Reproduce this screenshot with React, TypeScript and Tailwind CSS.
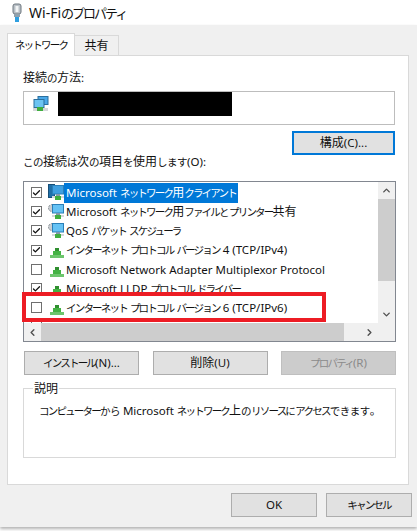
// Wi-Fi properties dialog (Windows 10), network tab with IPv6 row highlighted.
import { Check, ChevronUp, ChevronDown, ChevronLeft, ChevronRight } from 'lucide-react';

type IconKind = 'client' | 'service' | 'protocol';

interface Row {
  label: string;
  checked: boolean;
  icon: IconKind;
  selected?: boolean;
}

const ROWS: Row[] = [
  { label: 'Microsoft ネットワーク用クライアント', checked: true, icon: 'client', selected: true },
  { label: 'Microsoft ネットワーク用ファイルとプリンター共有', checked: true, icon: 'service' },
  { label: 'QoS パケット スケジューラ', checked: true, icon: 'service' },
  { label: 'インターネット プロトコル バージョン 4 (TCP/IPv4)', checked: true, icon: 'protocol' },
  { label: 'Microsoft Network Adapter Multiplexor Protocol', checked: false, icon: 'protocol' },
  { label: 'Microsoft LLDP プロトコル ドライバー', checked: true, icon: 'protocol' },
  { label: 'インターネット プロトコル バージョン 6 (TCP/IPv6)', checked: false, icon: 'protocol' },
  { label: 'Link-Layer Topology Discovery Responder', checked: true, icon: 'protocol' },
];

// The dialog font has narrow katakana and slightly narrow hiragana, so each
// script run gets its own size and tracking.
function T({ children }: { children: string }) {
  const parts = children.split(/([\u3040-\u309f]+|[\u30a0-\u30ff]+|[\u4e00-\u9fff]+)/);
  return (
    <>
      {parts.map((p, i) => {
        if (/^[\u3040-\u309f]/.test(p)) {
          return (
            <span key={i} className="text-[10.5px] tracking-[-0.5px]">
              {p}
            </span>
          );
        }
        if (/^[\u30a0-\u30ff]/.test(p)) {
          return (
            <span key={i} className="text-[10.5px] tracking-[-1.8px]">
              {p}
            </span>
          );
        }
        if (/^[\u4e00-\u9fff]/.test(p)) {
          return (
            <span key={i} className="text-[12px]">
              {p}
            </span>
          );
        }
        return <span key={i}>{p}</span>;
      })}
    </>
  );
}

function PlugIcon() {
  return (
    <svg width="12" height="19" viewBox="0 0 12 19" className="shrink-0">
      <rect x="2" y="1" width="8" height="10" rx="2" fill="#b9c0c6" stroke="#6f7880" />
      <rect x="4.5" y="3" width="3" height="6" fill="#f2f4f5" />
      <rect x="3" y="11" width="6" height="3" fill="#8fa1ad" />
      <rect x="4" y="14" width="4" height="5" fill="#2f9fe0" />
    </svg>
  );
}

function AdapterIcon() {
  return (
    <svg width="16" height="16" viewBox="0 0 16 16" className="shrink-0">
      <rect x="5" y="0.5" width="10" height="8" fill="#4aa8e8" stroke="#2a6f9e" />
      <rect x="1" y="3.5" width="10" height="8" fill="#6cc4f2" stroke="#2a6f9e" />
      <rect x="0" y="12" width="15" height="3" fill="#d5d8da" />
      <rect x="4" y="11" width="6" height="4" fill="#3fae3f" />
    </svg>
  );
}

function RowIcon({ kind }: { kind: IconKind }) {
  if (kind === 'protocol') {
    return (
      <svg width="14" height="10" viewBox="0 0 14 10" className="shrink-0 mt-[5px]">
        <rect x="5" y="0" width="4" height="4" fill="#2f8f2f" />
        <rect x="3" y="3" width="8" height="4" fill="#43b243" />
        <rect x="0" y="7" width="14" height="3" fill="#6cc56c" />
      </svg>
    );
  }
  const gear = kind === 'service';
  return (
    <svg width="17" height="17" viewBox="0 0 17 17" className="shrink-0">
      {gear ? (
        <circle cx="4" cy="5" r="3.5" fill="#c9ced2" stroke="#8a9096" strokeDasharray="2 1" />
      ) : (
        <rect x="0.5" y="0.5" width="6" height="13" fill="#1f6fa8" stroke="#174f78" />
      )}
      <rect x="4.5" y="1.5" width="11" height="8.5" fill={gear ? '#65c2f4' : '#3f9fe0'} stroke="#2a7fb8" />
      <rect x="8" y="10" width="4" height="2" fill="#7f98a8" />
      <rect x="4" y="12" width="12" height="2" fill="#d5d8da" />
      <rect x="7" y="12" width="6" height="4" fill="#3fae3f" />
    </svg>
  );
}

function Box({ checked }: { checked: boolean }) {
  return (
    <div className="w-[11px] h-[11px] border border-[#6f6f6f] bg-white flex items-center justify-center shrink-0">
      {checked && <Check size={10} strokeWidth={3.5} color="#111" />}
    </div>
  );
}

function Btn({ label, className }: { label: string; className: string }) {
  return (
    <div className={`h-[24px] flex items-center justify-center whitespace-nowrap ${className}`}>
      <span>
        <T>{label}</T>
      </span>
    </div>
  );
}

const normalBtn = 'border border-[#adadad] bg-[#e1e1e1] text-[#111]';

export default function App() {
  return (
    <div
      className="w-[417px] h-[531px] bg-white overflow-hidden text-[11.5px] text-[#111]"
      style={{ fontFamily: '"Noto Sans", "Noto Sans CJK JP", sans-serif' }}
    >
      {/* Title bar */}
      <div className="h-[25px] flex items-center pl-[11px] gap-[6px]">
        <PlugIcon />
        <span className="text-[14px] leading-none text-[#111] whitespace-nowrap">
          Wi-Fi<span className="text-[13px] tracking-[-2px]">のプロパティ</span>
        </span>
      </div>

      <div className="h-[502px] bg-[#f0f0f0] px-[7px] pt-[8px] shadow-[0_2px_3px_rgba(0,0,0,0.3)]">
        {/* Tabs */}
        <div className="flex items-end h-[22px] relative">
          <div className="w-[68px] h-[23px] -mb-px bg-white border border-b-0 border-[#d9d9d9] flex items-center justify-center relative z-10 whitespace-nowrap">
            <span>
              <T>ネットワーク</T>
            </span>
          </div>
          <div className="w-[44px] h-[20px] border border-l-0 border-b-0 border-[#d9d9d9] flex items-center justify-center">
            <T>共有</T>
          </div>
        </div>

        {/* Panel */}
        <div className="w-[402px] h-[430px] bg-white border border-[#d9d9d9] pl-[15px] pr-[13px] pt-[13px] relative">
          <div className="h-[17px] leading-[17px]">
            <T>接続の方法:</T>
          </div>
          <div className="h-[34px] mt-[5px] border border-[#bdbdbd] flex items-start pl-[9px] gap-[9px]">
            <div className="pt-[4px]">
              <AdapterIcon />
            </div>
            <div className="w-[174px] h-[24px] bg-black" />
          </div>

          <div className="flex justify-end mt-[6px]">
            <Btn label="構成(C)..." className="w-[103px] border-2 border-[#0078d7] bg-[#e1e1e1]" />
          </div>

          <div className="h-[17px] leading-[17px] mt-[-2px] mb-[11px] whitespace-nowrap">
            <T>この接続は次の項目を使用します(O):</T>
          </div>

          {/* Component list */}
          <div className="w-[373px] h-[161px] border border-[#828790] bg-white flex flex-col overflow-hidden">
            <div className="flex h-[141px]">
              <div className="w-[354px] overflow-hidden pt-[1px] pl-[7px]">
                {ROWS.map((r) => (
                  <div key={r.label} className="h-[19.2px] flex items-center gap-[5px]">
                    <Box checked={r.checked} />
                    <div className="w-[17px] flex justify-center ml-[1px]">
                      <RowIcon kind={r.icon} />
                    </div>
                    <span
                      className={`whitespace-nowrap leading-[19px] px-[2px] -ml-[6px] ${
                        r.selected ? 'bg-[#0078d7] text-white' : ''
                      }`}
                    >
                      <T>{r.label}</T>
                    </span>
                  </div>
                ))}
              </div>
              {/* Vertical scrollbar */}
              <div className="w-[17px] bg-[#f0f0f0] flex flex-col items-center">
                <ChevronUp size={11} strokeWidth={3} color="#505050" className="my-[3px] h-[11px]" />
                <div className="w-full h-[82px] bg-[#cdcdcd]" />
                <div className="flex-1" />
                <ChevronDown size={11} strokeWidth={3} color="#505050" className="my-[3px]" />
              </div>
            </div>
            {/* Horizontal scrollbar */}
            <div className="h-[18px] bg-[#f0f0f0] flex items-center">
              <div className="w-[17px] flex justify-center">
                <ChevronLeft size={11} strokeWidth={3} color="#505050" />
              </div>
              <div className="w-[303px] h-full bg-[#cdcdcd]" />
              <div className="flex-1" />
              <div className="w-[17px] flex justify-center">
                <ChevronRight size={11} strokeWidth={3} color="#505050" />
              </div>
              <div className="w-[17px]" />
            </div>
          </div>

          {/* Highlight drawn over the IPv6 row */}
          <div className="absolute left-[14px] top-[236px] w-[304px] h-[30px] border-[4px] border-[#ed1c24]" />

          <div className="flex justify-between w-[372px] mt-[9px] ml-[1px]">
            <Btn label="インストール(N)..." className={`w-[115px] ${normalBtn}`} />
            <Btn label="削除(U)" className={`w-[115px] ${normalBtn}`} />
            <Btn label="プロパティ(R)" className="w-[115px] border border-[#bfbfbf] bg-[#cccccc] text-[#8a8a8a]" />
          </div>

          {/* Description group */}
          <div className="w-[373px] h-[70px] border border-[#d9d9d9] mt-[13px] relative pl-[15px] pt-[13px]">
            <span className="absolute left-[9px] -top-[9px] bg-white px-[1px] leading-[17px]">
              <T>説明</T>
            </span>
            <div className="whitespace-nowrap leading-[17px]">
              <T>コンピューターから Microsoft ネットワーク上のリソースにアクセスできます。</T>
            </div>
          </div>
        </div>

        {/* Footer */}
        <div className="flex justify-end gap-[9px] mt-[8px] -mr-[2px]">
          <Btn label="OK" className={`w-[86px] ${normalBtn}`} />
          <Btn label="キャンセル" className={`w-[86px] ${normalBtn}`} />
        </div>
      </div>
    </div>
  );
}
